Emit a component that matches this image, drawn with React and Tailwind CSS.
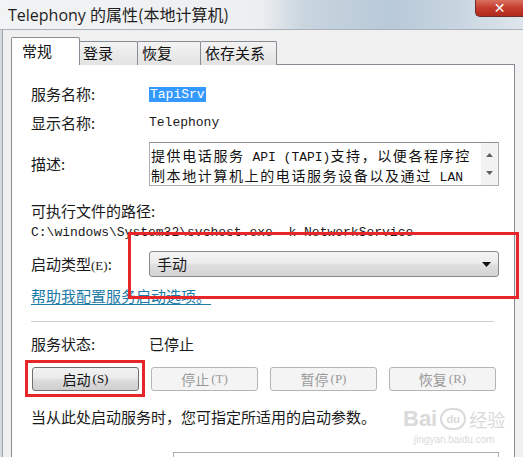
import React from "react";

const CJK = "font-['Noto_Sans_CJK_SC',sans-serif]";
const MONO = "font-['Liberation_Mono','Noto_Sans_CJK_SC',monospace]";

function Tab({ label, selected, w }) {
  if (selected) {
    return (
      <div
        className={`relative z-10 -mr-[1px] h-[28px] ${w} border border-b-0 border-[#898c95] bg-white rounded-t-[2px] flex items-center pl-[10px] text-[15px] text-[#111] ${CJK}`}
      >
        {label}
      </div>
    );
  }
  return (
    <div
      className={`h-[24px] ${w} border border-b-0 border-[#898c95] bg-[linear-gradient(#f3f3f3,#e3e3e3)] rounded-t-[2px] flex items-center pl-[4px] text-[15px] text-[#111] -ml-[1px] ${CJK}`}
    >
      {label}
    </div>
  );
}

function Btn({ label, key2, enabled }) {
  return (
    <div
      className={`w-[107px] h-[24px] rounded-[3px] border flex items-center justify-center text-[14px] ${CJK} ${
        enabled
          ? "border-[#707070] bg-[linear-gradient(#f2f2f2_0%,#ebebeb_45%,#dddddd_55%,#cfcfcf_100%)] text-[#111]"
          : "border-[#b5b5b5] bg-[#f4f4f4] text-[#9a9a9a]"
      }`}
    >
      <span>{label}</span>
      <span className="font-['Liberation_Serif',serif] text-[13px] ml-[2px]">({key2})</span>
    </div>
  );
}

export default function App() {
  const cj = `${CJK} text-[14px] tracking-[1.6px]`;
  const mo = "font-['Liberation_Mono',monospace] text-[13px] whitespace-pre";
  return (
    <div className="relative w-[523px] h-[457px] overflow-hidden bg-[#f0f0f0] text-[#1a1a1a]">
      {/* title bar */}
      <div className="relative h-[30px] border-b border-[#a9b2bb] bg-[linear-gradient(90deg,#f2f3f4_0%,#eceef0_50%,#c9d5df_58%,#b8c9d8_75%,#c9d6e1_88%,#dfe5eb_100%)] flex items-center pl-[8px]">
        <span className={`text-[16px] text-[#1e1e1e] ${CJK}`}>
          <span className="font-['Open_Sans',sans-serif]">Telephony </span>的属性(本地计算机)
        </span>
        <div className="absolute right-0 top-0 w-[48px] h-[17px] rounded-bl-[5px] border border-t-0 border-r-0 border-[#6b2d2d] bg-[linear-gradient(#d9705f,#c43c2c_50%,#b02a1f)] flex items-center justify-center">
          <span className="text-white text-[14px] font-bold leading-none font-['DejaVu_Sans',sans-serif]">✕</span>
        </div>
      </div>

      {/* body */}
      <div className="flex h-[427px]">
        <div className="w-[3px] bg-[#d6dbe0] border-r border-[#9aa3ac]" />
        <div className="flex-1 pl-[8px] pr-[8px] pt-[8px]">
          {/* tabs */}
          <div className="flex items-end h-[27px]">
            <Tab label="常规" selected w="w-[69px]" />
            <Tab label="登录" w="w-[60px]" />
            <Tab label="恢复" w="w-[64px]" />
            <Tab label="依存关系" w="w-[77px]" />
          </div>
          {/* panel */}
          <div className="-mt-[1px] h-[400px] border border-b-0 border-[#898c95] bg-white pl-[19px] pr-[14px]">
            <div className={`flex items-center h-[16px] mt-[21px] text-[15px] ${CJK}`}>
              <span className="w-[118px]">服务名称:</span>
              <span className={`${MONO} text-[13px] bg-[#3399ff] text-white px-[1px] leading-[15px]`}>TapiSrv</span>
            </div>
            <div className={`flex items-center h-[16px] mt-[13px] text-[15px] ${CJK}`}>
              <span className="w-[118px]">显示名称:</span>
              <span className={`${MONO} text-[13px]`}>Telephony</span>
            </div>
            <div className={`flex items-center mt-[11px] text-[15px] ${CJK}`}>
              <span className="w-[118px]">描述:</span>
              <div className="flex w-[350px] h-[44px] border border-[#abadb3] border-t-[#8e9096]">
                <div className="flex-1 pl-[1px] pt-[3px] leading-[17px] text-[#111]">
                  <div className="whitespace-nowrap">
                    <span className={cj}>提供电话服务</span>
                    <span className={mo}> API (TAPI)</span>
                    <span className={cj}>支持，以便各程序控</span>
                  </div>
                  <div className="whitespace-nowrap">
                    <span className={cj}>制本地计算机上的电话服务设备以及通过</span>
                    <span className={mo}> LAN</span>
                  </div>
                </div>
                <div className="w-[17px] bg-[#f2f2f2] flex flex-col items-center justify-between py-[10px]">
                  <svg width="7" height="4" viewBox="0 0 7 4"><path d="M0 4 L3.5 0 L7 4 Z" fill="#606060" /></svg>
                  <svg width="7" height="4" viewBox="0 0 7 4"><path d="M0 0 L3.5 4 L7 0 Z" fill="#606060" /></svg>
                </div>
              </div>
            </div>
            <div className={`h-[16px] mt-[17px] flex items-center text-[15px] ${CJK}`}>可执行文件的路径:</div>
            <div className={`h-[16px] mt-[6px] flex items-center ${MONO} text-[13px] whitespace-pre`}>
              C:\windows\System32\svchost.exe -k NetworkService
            </div>
            <div className={`flex items-center mt-[10px] text-[15px] ${CJK}`}>
              <span className="w-[118px]">
                启动类型<span className="font-['Liberation_Serif',serif] text-[13px]">(E)</span>:
              </span>
              <div className="w-[350px] h-[26px] rounded-[3px] border border-[#8b8b8b] bg-[linear-gradient(#f4f4f4_0%,#ececec_45%,#dedede_55%,#d4d4d4_100%)] flex items-center justify-between pl-[7px] pr-[7px]">
                <span>手动</span>
                <svg width="9" height="5" viewBox="0 0 9 5"><path d="M0 0 L9 0 L4.5 5 Z" fill="#111" /></svg>
              </div>
            </div>
            <div className={`h-[16px] mt-[11px] flex items-center text-[15px] text-[#1c7aa6] underline underline-offset-[2px] ${CJK}`}>
              帮助我配置服务启动选项。
            </div>
            <div className="mt-[17px] w-[463px] border-t border-[#cfcfcf]" />
            <div className={`flex items-center h-[16px] mt-[14px] text-[15px] ${CJK}`}>
              <span className="w-[118px]">服务状态:</span>
              <span>已停止</span>
            </div>
            <div className="flex gap-[12px] mt-[15px] ml-[1px]">
              <Btn label="启动" key2="S" enabled />
              <Btn label="停止" key2="T" />
              <Btn label="暂停" key2="P" />
              <Btn label="恢复" key2="R" />
            </div>
            <div className="relative flex items-center h-[16px] mt-[18px]">
              <span className={`text-[15px] ${CJK}`}>当从此处启动服务时，您可指定所适用的启动参数。</span>
              <div className="absolute left-[372px] -top-[1px] flex flex-col items-center whitespace-nowrap text-[#dadada]">
                <div className="flex items-center gap-[3px] whitespace-nowrap">
                  <span className="font-['Liberation_Sans',sans-serif] text-[22px] font-bold leading-none">Bai</span>
                  <span className="w-[26px] h-[22px] rounded-full border-2 border-[#dadada] text-[11px] font-bold leading-none flex items-center justify-center font-['Liberation_Sans',sans-serif]">du</span>
                  <span className={`text-[18px] leading-none whitespace-nowrap ${CJK}`}>经验</span>
                </div>
                <span className="font-['Liberation_Sans',sans-serif] text-[10px] leading-none mt-[5px] whitespace-nowrap">jingyan.baidu.com</span>
              </div>
            </div>
            <div className="ml-[142px] mt-[27px] w-[326px] h-[20px] border border-[#abadb3]" />
          </div>
        </div>
      </div>

      {/* annotation boxes */}
      <div className="absolute left-[128px] top-[232px] w-[391px] h-[67px] border-[3px] border-[#e8262a]" />
      <div className="absolute left-[25px] top-[360px] w-[120px] h-[37px] border-[3px] border-[#e8262a]" />
    </div>
  );
}
